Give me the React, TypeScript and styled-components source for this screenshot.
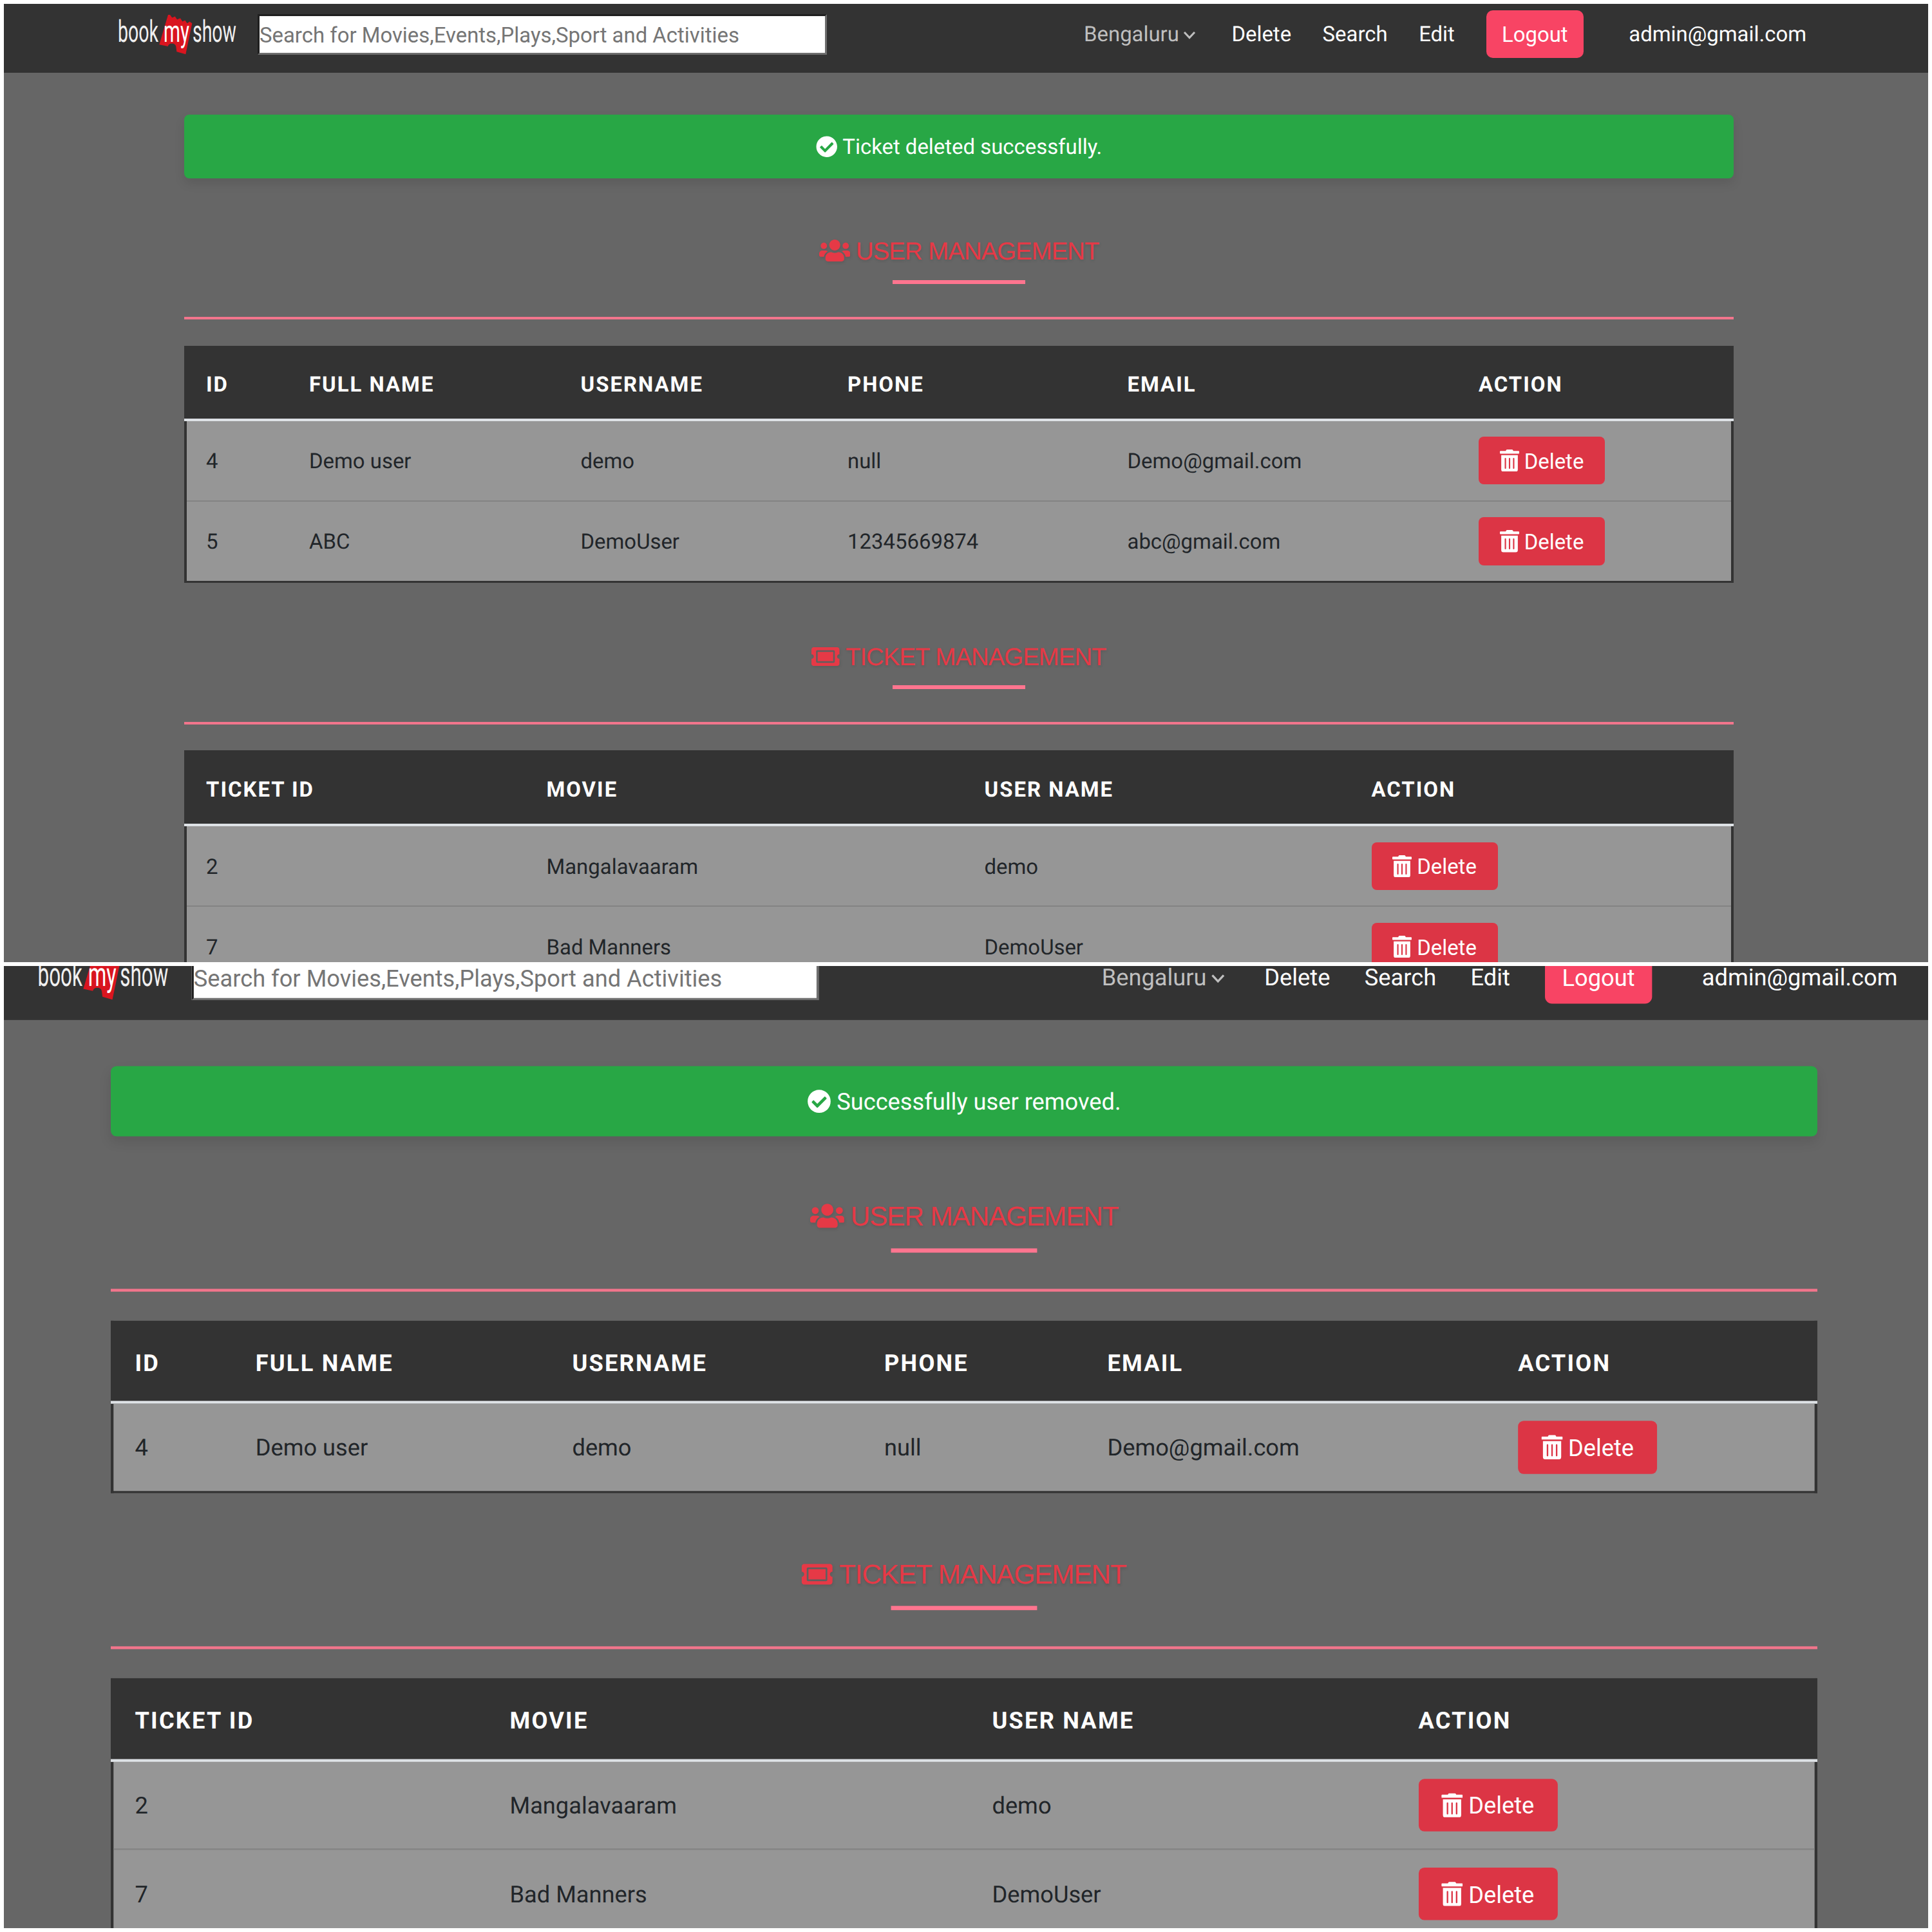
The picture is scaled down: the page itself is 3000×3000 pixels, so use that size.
import React from "react";
import styled, { createGlobalStyle } from "styled-components";
import { FaCheckCircle, FaTicketAlt, FaTrashAlt, FaUsers } from "react-icons/fa";

const GlobalStyle = createGlobalStyle`
  *, *::before, *::after { box-sizing: border-box; }
  html, body { margin: 0; padding: 0; background: #fff; }
`;

const Collage = styled.main`
  display: grid;
  grid-template-rows: 1488px 1494px;
  gap: 6px;
  width: 3000px;
  height: 3000px;
  padding: 6px;
`;

const Shot = styled.section`
  overflow: hidden;
  background: #666;
`;

const Page = styled.div<{ $zoom: number; $left: number; $top: number }>`
  width: 2988px;
  min-height: 1488px;
  background: #666;
  color: #212529;
  font: 400 32.9px/48px Roboto, "Liberation Sans", sans-serif;
  text-rendering: geometricPrecision;
  transform-origin: 0 0;
  transform: ${p => `translate(${p.$left}px, ${p.$top}px) scale(${p.$zoom})`};
`;

const Header = styled.header`
  height: 106.7px;
  padding: 9.5px 189px 0 176px;
  background: #333;
`;

const HeaderRow = styled.div`
  display: flex;
  align-items: center;
  height: 74.5px;
`;

const Logo = styled.svg`
  flex: none;
  width: 188px;
  height: 66px;
  overflow: visible;
`;

const SearchBox = styled.input`
  width: 884px;
  height: 63px;
  margin: 2px 0 0 30px;
  padding: 2px 0 0;
  border: 3.8px solid;
  border-color: #1f1f1f #6e6e6e #6e6e6e #1f1f1f;
  border-radius: 0;
  background: #fff;
  font: inherit;
  &::placeholder { color: #757575; opacity: 1; }
`;

const Nav = styled.nav`
  display: flex;
  align-items: center;
  margin-left: auto;
  color: #fff;
  white-space: nowrap;
`;

const NavLink = styled.a`
  margin-left: 48.5px;
  padding-top: 3px;
`;

const City = styled.span`
  display: flex;
  align-items: center;
  gap: 6px;
  margin-right: 7px;
  padding-top: 3px;
  color: #bfbfbf;
`;

const Chevron = styled.svg`
  width: 20px;
  height: 13px;
`;

const Logout = styled.button`
  width: 151px;
  height: 74.5px;
  margin: 0 22px 0 49px;
  padding: 3px 0 0;
  border: 0;
  border-radius: 10px;
  background: #f84464;
  color: #fff;
  font: inherit;
`;

const Content = styled.div`
  width: 2406px;
  margin: 65.6px 0 0 280px;
`;

const Alert = styled.div`
  display: flex;
  align-items: center;
  justify-content: center;
  gap: 8px;
  height: 99.2px;
  border-radius: 8px;
  background: #28a745;
  box-shadow: 0 8px 16px rgba(0, 0, 0, 0.1);
  color: #fff;
`;

const Heading = styled.h2<{ $gap: number }>`
  display: flex;
  align-items: center;
  justify-content: center;
  height: 48px;
  margin: ${p => p.$gap}px 0 0;
  color: #e63946;
  font: 400 38.4px/48px "Liberation Sans", Arial, sans-serif;
  letter-spacing: -1px;
  text-shadow: 1px 2px 4px rgba(0, 0, 0, 0.12);
  svg { margin-right: 9px; filter: drop-shadow(1px 2px 2px rgba(0, 0, 0, 0.1)); }
`;

const OffsetText = styled.span`
  padding-top: 3px;
`;

const Underline = styled.div<{ $gap: number }>`
  width: 206px;
  height: 6.4px;
  margin: ${p => p.$gap}px auto 0;
  background: #ff758f;
`;

const Rule = styled.hr`
  height: 4px;
  margin: 50.6px 0 40.9px;
  border: 0;
  background: #f2758c;
`;

const Table = styled.div`
  border: solid #333;
  border-width: 0 4px 3.6px;
`;

const Row = styled.div<{ $cols: number[] }>`
  display: grid;
  grid-template-columns: ${p => p.$cols.map(c => `${c}px`).join(" ")} 1fr;
  align-items: center;
  height: 124.9px;
  padding-left: 30px;
  border-bottom: 2px solid #838383;
  background: #969696;
  white-space: nowrap;
  &:last-child { height: 123.5px; border-bottom: 0; }
`;

const HeadRow = styled(Row)<{ $height: number }>`
  height: ${p => p.$height}px;
  margin: 0 -4px;
  padding-left: 34px;
  padding-top: 6px;
  border-bottom: 4px solid #dee2e6;
  background: #333;
  color: #fff;
  font-weight: 700;
  letter-spacing: 2px;
`;

const Cell = styled.span`
  padding-top: 4px;
`;

const DeleteButton = styled.button`
  display: flex;
  align-items: center;
  justify-content: center;
  gap: 8px;
  width: 196px;
  height: 74.5px;
  padding: 3px 0 0;
  border: 0;
  border-radius: 8px;
  background: #dc3545;
  color: #fff;
  font: inherit;
`;

const UsersIcon = styled(FaUsers)`width: 48.5px; height: 40px;`;
const TicketIcon = styled(FaTicketAlt)`width: 43.5px; height: 39px;`;
const TrashIcon = styled(FaTrashAlt)`width: 30px; height: 34.5px; margin-top: -3px;`;
const CheckIcon = styled(FaCheckCircle)`width: 33.5px; height: 33.5px;`;

function BrandLogo() {
  return (
    <Logo viewBox="0 0 188 66" aria-label="bookmyshow">
      <path
        d="M79 3 L82 3 L85.300 7.600 L89.700 5.600 L93 10.200 L98 8.200 L101.300 13.600 L105.300 11.600 L108.700 16.200 L112.300 13.600 L116.300 16.200 L106.300 64.200 L92.300 60.200 L91.300 52 Q90 47.500 85 47.500 Q80 47.500 78.700 52 L65.300 49.200 Z"
        fill="#d9151f"
      />
      <g fontFamily="Roboto, sans-serif" fontSize="47" fill="#f0f0f0">
        <text x="1" y="45.300" textLength="63" lengthAdjust="spacingAndGlyphs">book</text>
        <text x="72" y="45.300" textLength="40" lengthAdjust="spacingAndGlyphs" fill="#fff">my</text>
        <text x="117" y="45.300" textLength="68" lengthAdjust="spacingAndGlyphs">show</text>
      </g>
    </Logo>
  );
}

function TopBar() {
  return (
    <Header>
      <HeaderRow>
        <BrandLogo />
        <SearchBox placeholder="Search for Movies,Events,Plays,Sport and Activities" />
        <Nav>
          <City>
            Bengaluru
            <Chevron viewBox="0 0 20 13">
              <path d="M2 2 L10 10.500 L18 2" fill="none" stroke="currentColor" strokeWidth="3" />
            </Chevron>
          </City>
          <NavLink>Delete</NavLink>
          <NavLink>Search</NavLink>
          <NavLink>Edit</NavLink>
          <Logout>Logout</Logout>
          <NavLink>admin@gmail.com</NavLink>
        </Nav>
      </HeaderRow>
    </Header>
  );
}

interface DataTableProps {
  heads: string[];
  cols: number[];
  rows: string[][];
  headHeight: number;
}

function DataTable({ heads, cols, rows, headHeight }: DataTableProps) {
  return (
    <Table>
      <HeadRow $cols={cols} $height={headHeight}>
        {heads.map(h => <OffsetText key={h}>{h}</OffsetText>)}
      </HeadRow>
      {rows.map(row => (
        <Row key={row[0]} $cols={cols}>
          {row.map((cell, i) => <Cell key={i}>{cell}</Cell>)}
          <DeleteButton><TrashIcon />Delete</DeleteButton>
        </Row>
      ))}
    </Table>
  );
}

const USER_HEADS = ["ID", "FULL NAME", "USERNAME", "PHONE", "EMAIL", "ACTION"];
const TICKET_HEADS = ["TICKET ID", "MOVIE", "USER NAME", "ACTION"];
const TICKET_COLS = [528.5, 680, 601];
const TICKETS = [
  ["2", "Mangalavaaram", "demo"],
  ["7", "Bad Manners", "DemoUser"],
];

interface AdminPageProps {
  message: string;
  users: string[][];
  userCols: number[];
  zoom: number;
  left: number;
  top: number;
}

function AdminPage({ message, users, userCols, zoom, left, top }: AdminPageProps) {
  return (
    <Shot>
      <Page $zoom={zoom} $left={left} $top={top}>
        <TopBar />
        <Content>
          <Alert><CheckIcon /><OffsetText>{message}</OffsetText></Alert>
          <Heading $gap={88}><UsersIcon /><OffsetText>USER MANAGEMENT</OffsetText></Heading>
          <Underline $gap={21.3} />
          <Rule />
          <DataTable heads={USER_HEADS} cols={userCols} rows={users} headHeight={117} />
          <Heading $gap={90}><TicketIcon /><OffsetText>TICKET MANAGEMENT</OffsetText></Heading>
          <Underline $gap={20.5} />
          <Rule />
          <DataTable heads={TICKET_HEADS} cols={TICKET_COLS} rows={TICKETS} headHeight={118} />
        </Content>
      </Page>
    </Shot>
  );
}

export default function App() {
  return (
    <>
      <GlobalStyle />
      <Collage>
        <AdminPage
          message="Ticket deleted successfully."
          users={[
            ["4", "Demo user", "demo", "null", "Demo@gmail.com"],
            ["5", "ABC", "DemoUser", "12345669874", "abc@gmail.com"],
          ]}
          userCols={[160, 421.5, 414.5, 434.5, 545.5]}
          zoom={1}
          left={0}
          top={0}
        />
        <AdminPage
          message="Successfully user removed."
          users={[["4", "Demo user", "demo", "null", "Demo@gmail.com"]]}
          userCols={[170, 446.5, 440, 314.5, 579]}
          zoom={1.1014}
          left={-142.4}
          top={-34}
        />
      </Collage>
    </>
  );
}
